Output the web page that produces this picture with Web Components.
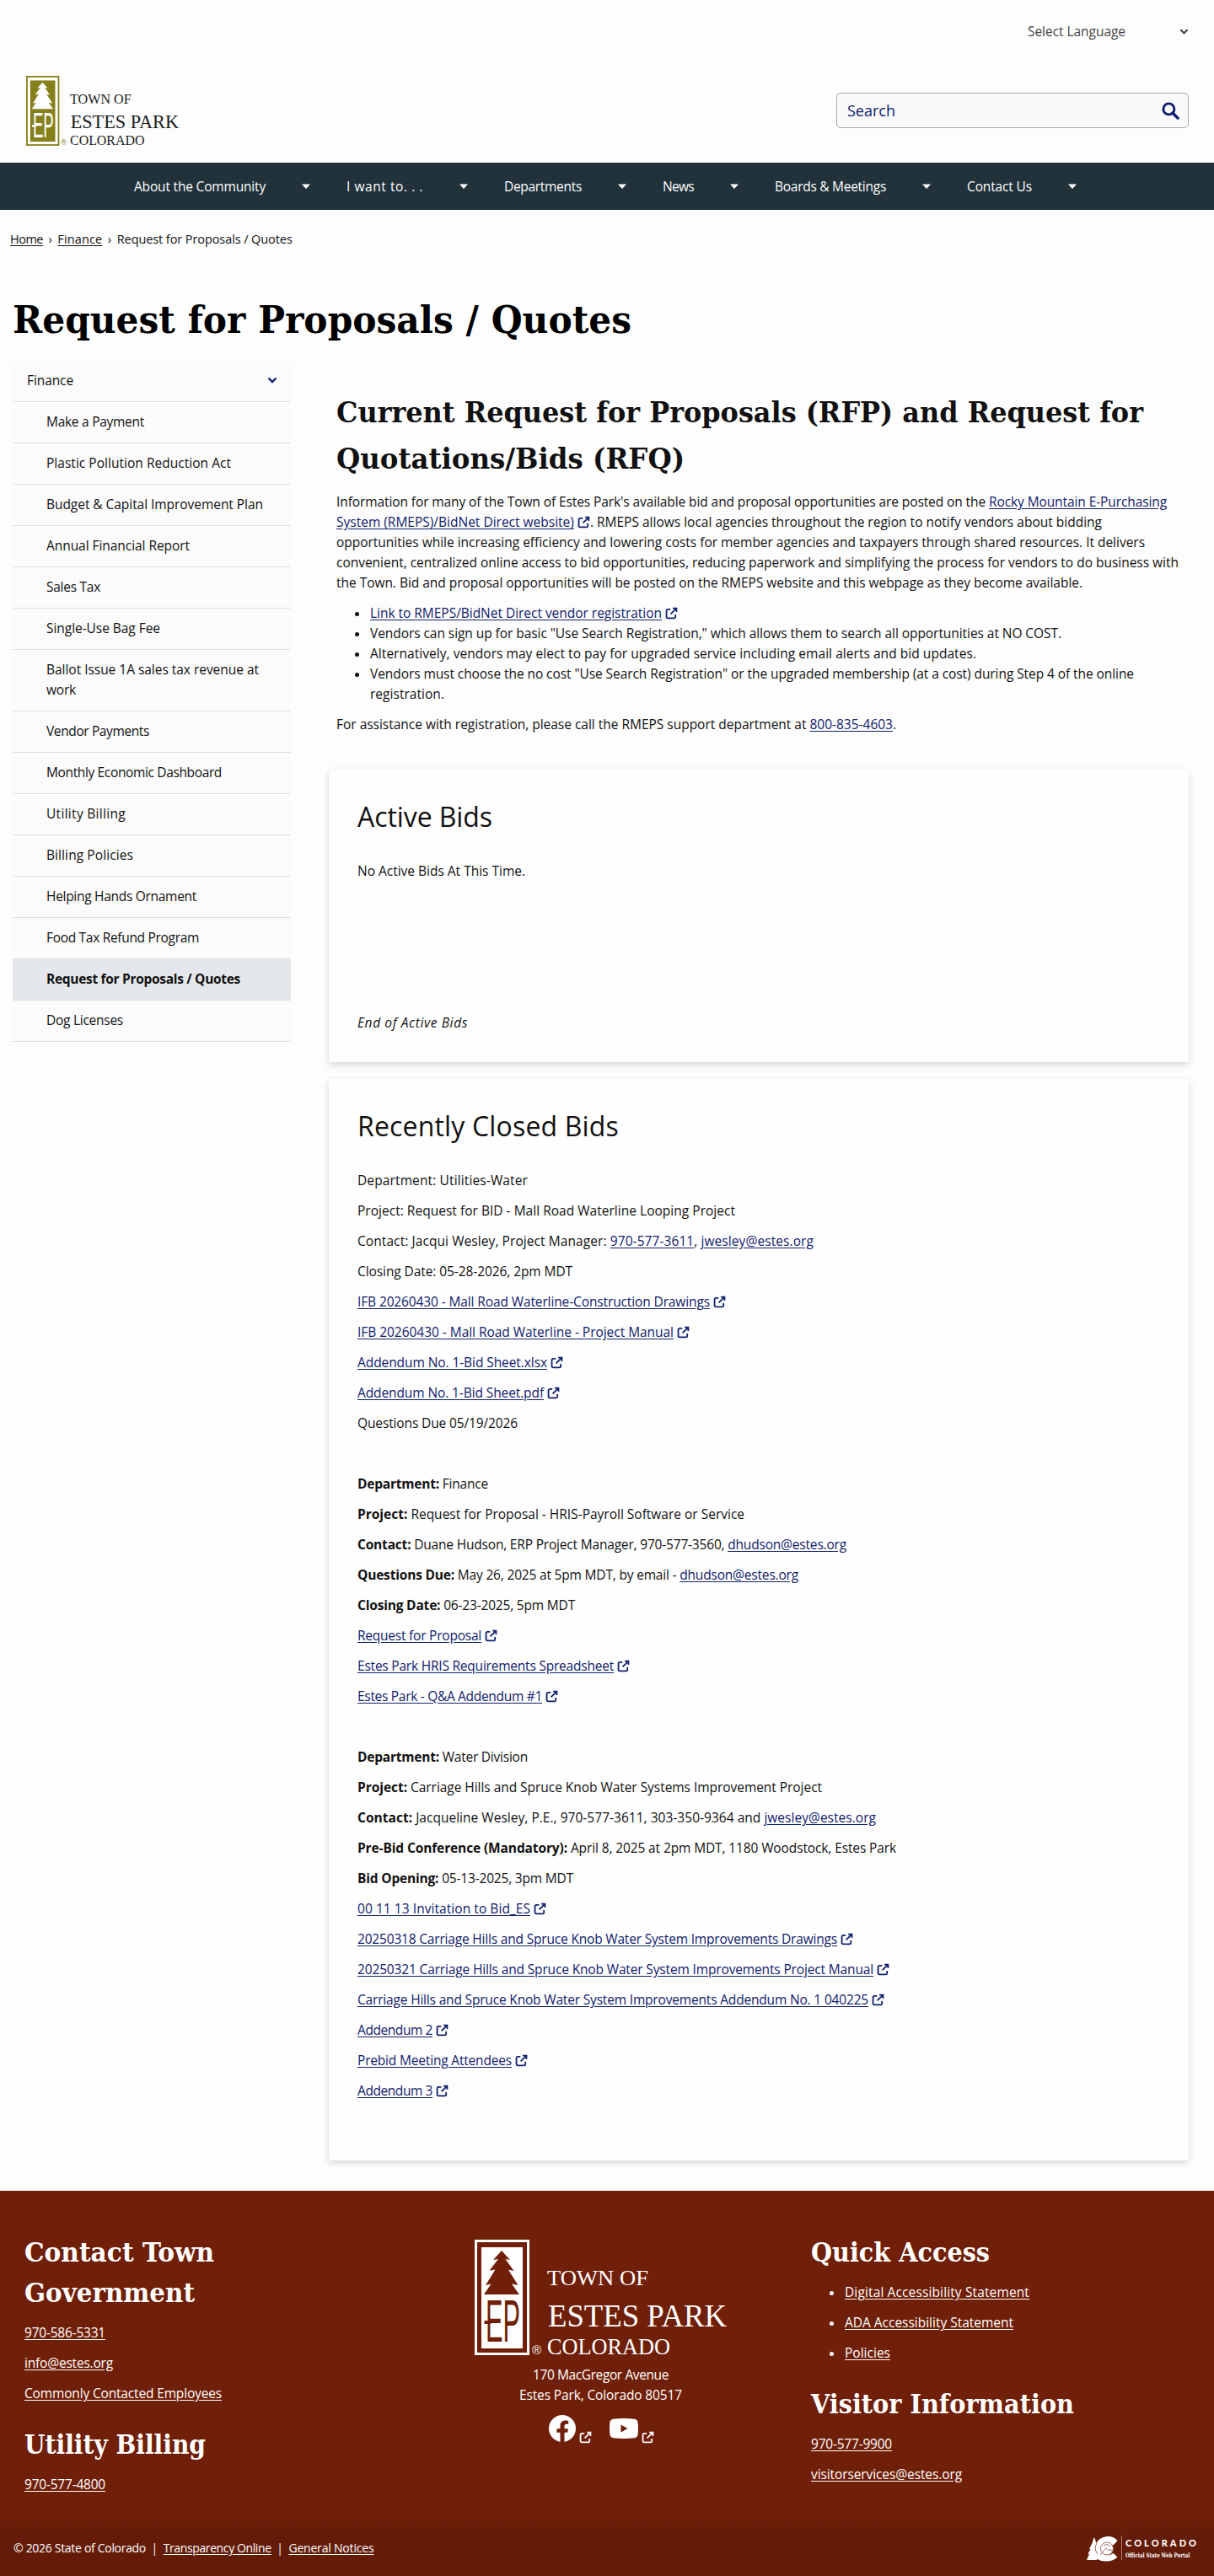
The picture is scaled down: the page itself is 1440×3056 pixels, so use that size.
<!DOCTYPE html>
<html lang="en">
<head>
<meta charset="utf-8">
<title>Request for Proposals / Quotes</title>
<style>
  body {
    background: #fdfdfd;
    color: #111111;
    font-family: 'Open Sans', 'Noto Sans', sans-serif;
    font-size: 15.5px;
    line-height: 24px;
    margin: 0;
  }
</style>
</head>
<body>

<ep-header></ep-header>

<ep-nav>
  <ep-nav-item width="156">About the Community</ep-nav-item>
  <ep-nav-item width="91">I want to. . .</ep-nav-item>
  <ep-nav-item width="92">Departments</ep-nav-item>
  <ep-nav-item width="37">News</ep-nav-item>
  <ep-nav-item width="132">Boards &amp; Meetings</ep-nav-item>
  <ep-nav-item width="77">Contact Us</ep-nav-item>
</ep-nav>

<ep-breadcrumb>
  <ep-text width="39"><ep-link>Home</ep-link></ep-text>
  <span>›</span>
  <ep-text width="53"><ep-link>Finance</ep-link></ep-text>
  <span>›</span>
  <ep-text width="208">Request for Proposals / Quotes</ep-text>
</ep-breadcrumb>

<ep-page>
  <ep-heading slot="title" level="1"><ep-text stretch width="734">Request for Proposals / Quotes</ep-text></ep-heading>

  <ep-side-nav slot="side">
    <ep-side-item parent><ep-text width="55">Finance</ep-text></ep-side-item>
    <ep-side-item><ep-text width="116">Make a Payment</ep-text></ep-side-item>
    <ep-side-item><ep-text width="219">Plastic Pollution Reduction Act</ep-text></ep-side-item>
    <ep-side-item><ep-text width="257">Budget &amp; Capital Improvement Plan</ep-text></ep-side-item>
    <ep-side-item><ep-text width="170">Annual Financial Report</ep-text></ep-side-item>
    <ep-side-item><ep-text width="64">Sales Tax</ep-text></ep-side-item>
    <ep-side-item><ep-text width="135">Single-Use Bag Fee</ep-text></ep-side-item>
    <ep-side-item><ep-text width="252">Ballot Issue 1A sales tax revenue at</ep-text><ep-text width="35">work</ep-text></ep-side-item>
    <ep-side-item><ep-text width="122">Vendor Payments</ep-text></ep-side-item>
    <ep-side-item><ep-text width="208">Monthly Economic Dashboard</ep-text></ep-side-item>
    <ep-side-item><ep-text width="94">Utility Billing</ep-text></ep-side-item>
    <ep-side-item><ep-text width="103">Billing Policies</ep-text></ep-side-item>
    <ep-side-item><ep-text width="178">Helping Hands Ornament</ep-text></ep-side-item>
    <ep-side-item><ep-text width="181">Food Tax Refund Program</ep-text></ep-side-item>
    <ep-side-item selected><ep-text width="230">Request for Proposals / Quotes</ep-text></ep-side-item>
    <ep-side-item><ep-text width="91">Dog Licenses</ep-text></ep-side-item>
  </ep-side-nav>

  <ep-intro>
    <ep-heading slot="heading" level="2">
      <ep-text stretch width="957">Current Request for Proposals (RFP) and Request for</ep-text>
      <ep-text stretch width="413">Quotations/Bids (RFQ)</ep-text>
    </ep-heading>
    <ep-text width="985">Information for many of the Town of Estes Park's available bid and proposal opportunities are posted on the <ep-link>Rocky Mountain E-Purchasing</ep-link></ep-text>
    <ep-text width="908"><ep-link external>System (RMEPS)/BidNet Direct website)</ep-link>. RMEPS allows local agencies throughout the region to notify vendors about bidding</ep-text>
    <ep-text width="959">opportunities while increasing efficiency and lowering costs for member agencies and taxpayers through shared resources. It delivers</ep-text>
    <ep-text width="999">convenient, centralized online access to bid opportunities, reducing paperwork and simplifying the process for vendors to do business with</ep-text>
    <ep-text width="885">the Town. Bid and proposal opportunities will be posted on the RMEPS website and this webpage as they become available.</ep-text>
    <ep-list slot="list">
      <ep-list-item><ep-text width="365"><ep-link external>Link to RMEPS/BidNet Direct vendor registration</ep-link></ep-text></ep-list-item>
      <ep-list-item><ep-text width="820">Vendors can sign up for basic "Use Search Registration," which allows them to search all opportunities at NO COST.</ep-text></ep-list-item>
      <ep-list-item><ep-text width="719">Alternatively, vendors may elect to pay for upgraded service including email alerts and bid updates.</ep-text></ep-list-item>
      <ep-list-item><ep-text width="906">Vendors must choose the no cost "Use Search Registration" or the upgraded membership (at a cost) during Step 4 of the online</ep-text><ep-text width="88">registration.</ep-text></ep-list-item>
    </ep-list>
    <ep-text slot="after" width="664">For assistance with registration, please call the RMEPS support department at <ep-link>800-835-4603</ep-link>.</ep-text>
  </ep-intro>

  <ep-card>
    <ep-text slot="heading" width="160">Active Bids</ep-text>
    <ep-text width="199">No Active Bids At This Time.</ep-text>
    <p>&nbsp;</p>
    <p>&nbsp;</p>
    <p>&nbsp;</p>
    <p>&nbsp;</p>
    <ep-text width="131"><i>End of Active Bids</i></ep-text>
  </ep-card>

  <ep-card>
    <ep-text slot="heading" width="310">Recently Closed Bids</ep-text>
    <ep-text width="202">Department: Utilities-Water</ep-text>
    <ep-text width="448">Project: Request for BID - Mall Road Waterline Looping Project</ep-text>
    <ep-text width="541">Contact: Jacqui Wesley, Project Manager: <ep-link>970-577-3611</ep-link>, <ep-link>jwesley@estes.org</ep-link></ep-text>
    <ep-text width="255">Closing Date: 05-28-2026, 2pm MDT</ep-text>
    <ep-text width="437"><ep-link external>IFB 20260430 - Mall Road Waterline-Construction Drawings</ep-link></ep-text>
    <ep-text width="394"><ep-link external>IFB 20260430 - Mall Road Waterline - Project Manual</ep-link></ep-text>
    <ep-text width="244"><ep-link external>Addendum No. 1-Bid Sheet.xlsx</ep-link></ep-text>
    <ep-text width="240"><ep-link external>Addendum No. 1-Bid Sheet.pdf</ep-link></ep-text>
    <ep-text width="190">Questions Due 05/19/2026</ep-text>
    <p>&nbsp;</p>
    <ep-text width="155"><b>Department:</b> Finance</ep-text>
    <ep-text width="459"><b>Project:</b> Request for Proposal - HRIS-Payroll Software or Service</ep-text>
    <ep-text width="580"><b>Contact:</b> Duane Hudson, ERP Project Manager, 970-577-3560, <ep-link>dhudson@estes.org</ep-link></ep-text>
    <ep-text width="523"><b>Questions Due:</b> May 26, 2025 at 5pm MDT, by email - <ep-link>dhudson@estes.org</ep-link></ep-text>
    <ep-text width="258"><b>Closing Date:</b> 06-23-2025, 5pm MDT</ep-text>
    <ep-text width="166"><ep-link external>Request for Proposal</ep-link></ep-text>
    <ep-text width="323"><ep-link external>Estes Park HRIS Requirements Spreadsheet</ep-link></ep-text>
    <ep-text width="238"><ep-link external>Estes Park - Q&amp;A Addendum #1</ep-link></ep-text>
    <p>&nbsp;</p>
    <ep-text width="202"><b>Department:</b> Water Division</ep-text>
    <ep-text width="551"><b>Project:</b> Carriage Hills and Spruce Knob Water Systems Improvement Project</ep-text>
    <ep-text width="615"><b>Contact:</b> Jacqueline Wesley, P.E., 970-577-3611, 303-350-9364 and <ep-link>jwesley@estes.org</ep-link></ep-text>
    <ep-text width="639"><b>Pre-Bid Conference (Mandatory):</b> April 8, 2025 at 2pm MDT, 1180 Woodstock, Estes Park</ep-text>
    <ep-text width="256"><b>Bid Opening:</b> 05-13-2025, 3pm MDT</ep-text>
    <ep-text width="224"><ep-link external>00 11 13 Invitation to Bid_ES</ep-link></ep-text>
    <ep-text width="588"><ep-link external>20250318 Carriage Hills and Spruce Knob Water System Improvements Drawings</ep-link></ep-text>
    <ep-text width="631"><ep-link external>20250321 Carriage Hills and Spruce Knob Water System Improvements Project Manual</ep-link></ep-text>
    <ep-text width="625"><ep-link external>Carriage Hills and Spruce Knob Water System Improvements Addendum No. 1 040225</ep-link></ep-text>
    <ep-text width="108"><ep-link external>Addendum 2</ep-link></ep-text>
    <ep-text width="202"><ep-link external>Prebid Meeting Attendees</ep-link></ep-text>
    <ep-text width="108"><ep-link external>Addendum 3</ep-link></ep-text>
    <p>&nbsp;</p>
  </ep-card>
</ep-page>

<ep-footer>
  <ep-footer-block slot="left">
    <ep-heading slot="heading" level="3">
      <ep-text stretch width="225">Contact Town</ep-text>
      <ep-text stretch width="202">Government</ep-text>
    </ep-heading>
    <ep-text width="96"><ep-link>970-586-5331</ep-link></ep-text>
    <ep-text width="105"><ep-link>info@estes.org</ep-link></ep-text>
    <ep-text width="234"><ep-link>Commonly Contacted Employees</ep-link></ep-text>
  </ep-footer-block>
  <ep-footer-block slot="left">
    <ep-heading slot="heading" level="3"><ep-text stretch width="215">Utility Billing</ep-text></ep-heading>
    <ep-text width="96"><ep-link>970-577-4800</ep-link></ep-text>
  </ep-footer-block>

  <ep-text slot="address" width="161">170 MacGregor Avenue</ep-text>
  <ep-text slot="address" width="193">Estes Park, Colorado 80517</ep-text>

  <ep-footer-block slot="right">
    <ep-heading slot="heading" level="3"><ep-text stretch width="212">Quick Access</ep-text></ep-heading>
    <ep-list loose>
      <ep-list-item><ep-text width="219"><ep-link>Digital Accessibility Statement</ep-link></ep-text></ep-list-item>
      <ep-list-item><ep-text width="200"><ep-link>ADA Accessibility Statement</ep-link></ep-text></ep-list-item>
      <ep-list-item><ep-text width="54"><ep-link>Policies</ep-link></ep-text></ep-list-item>
    </ep-list>
  </ep-footer-block>
  <ep-footer-block slot="right">
    <ep-heading slot="heading" level="3"><ep-text stretch width="312">Visitor Information</ep-text></ep-heading>
    <ep-text width="96"><ep-link>970-577-9900</ep-link></ep-text>
    <ep-text width="179"><ep-link>visitorservices@estes.org</ep-link></ep-text>
  </ep-footer-block>
</ep-footer>

<ep-footer-bar>
  <ep-text width="157">© 2026 State of Colorado</ep-text>
  <span>|</span>
  <ep-text width="128"><ep-link>Transparency Online</ep-link></ep-text>
  <span>|</span>
  <ep-text width="101"><ep-link>General Notices</ep-link></ep-text>
</ep-footer-bar>

<script>
// Shared by all elements
// Clones markup into an open root
class ParkElement extends HTMLElement {
  constructor() {
    super();

    const template = document.createElement( 'template' );
    template.innerHTML = this.constructor.markup.trim();

    // Root
    const shadowRoot = this.attachShadow( {mode: 'open'} );
    shadowRoot.appendChild( template.content.cloneNode( true ) );
  }
}

// Icons by name
const ICONS = {
  external: '<svg viewBox="0 0 24 24"><path d="M10 4.5H5A2.5 2.5 0 0 0 2.5 7v12A2.5 2.5 0 0 0 5 21.5h12a2.5 2.5 0 0 0 2.5-2.5v-4.5M14.5 2.5h7v7M21.5 2.5l-11 11" fill="none" stroke="currentColor" stroke-width="2.9"/></svg>',
  search: '<svg viewBox="0 0 22 22"><circle cx="8.8" cy="8.8" r="6.8" fill="none" stroke="currentColor" stroke-width="3"/><path d="M13.8 13.8L20 20" stroke="currentColor" stroke-width="3.6" stroke-linecap="round"/></svg>',
  chevron: '<svg viewBox="0 0 12 12"><path d="M1.5 3.5L6 8l4.500-4.500" fill="none" stroke="currentColor" stroke-width="2.3"/></svg>',
  caret: '<svg viewBox="0 0 12 12"><path d="M1 3.500h10L6 9z" fill="currentColor"/></svg>',
  facebook: '<svg viewBox="0 0 32 32"><circle cx="16" cy="16" r="16" fill="currentColor"/><path d="M13.5 32V20.8H9.400v-4.600h4.100v-3.500c0-4.100 2.400-6.300 6.100-6.300 1.800 0 3.600.3 3.600.3v4h-2c-2 0-2.700 1.300-2.700 2.600v2.900h4.500l-.7 4.600h-3.800V32z" fill="#701f08"/></svg>',
  youtube: '<svg viewBox="0 0 34 24"><path d="M4.500.7Q17-.6 29.500.7 33 1.200 33.500 4.500q1 7.500 0 15-.5 3.300-4 3.800-12.500 1.300-25 0-3.500-.5-4-3.800-1-7.500 0-15Q1 1.200 4.500.7z" fill="currentColor"/><path d="M13.500 7.500v9l8-4.500z" fill="#701f08"/></svg>'
};

class ParkIcon extends ParkElement {
  static markup = `
    <style>
      :host {
        display: inline-block;
      }

      span,
      svg {
        display: block;
        height: 100%;
        width: 100%;
      }
    </style><span></span>
  `;

  connectedCallback() {
    this.shadowRoot.querySelector( 'span' ).innerHTML = ICONS[this.getAttribute( 'name' )];
  }
}

window.customElements.define( 'ep-icon', ParkIcon );

// No whitespace around the anchor
// It would show next to punctuation
class ParkLink extends ParkElement {
  static markup = `
    <style>
      :host {
        display: inline;
      }

      a {
        color: var( --link-color, #10206c );
        text-decoration: underline;
        text-underline-offset: 2px;
      }

      ep-icon {
        color: var( --link-color, #10206c );
        display: none;
        height: 15px;
        margin-left: 4px;
        vertical-align: -2px;
        width: 15px;
      }

      :host( [external] ) ep-icon {
        display: inline-block;
      }
    </style><a href="#"><slot></slot></a><ep-icon name="external"></ep-icon>
  `;
}

window.customElements.define( 'ep-link', ParkLink );

// One line of text set to a given width
// Letter spacing by default
// Horizontal scale when "stretch" is present
class ParkText extends ParkElement {
  static markup = `
    <style>
      :host {
        display: block;
        transform-origin: left center;
        white-space: nowrap;
        width: max-content;
      }
    </style>
    <slot></slot>
  `;

  connectedCallback() {
    const target = parseFloat( this.getAttribute( 'width' ) );
    const actual = this.getBoundingClientRect().width;
    const count = this.textContent.trim().length;

    if( !target || !actual ) {
      return;
    }

    if( this.hasAttribute( 'stretch' ) ) {
      this.style.transform = `scaleX( ${target / actual} )`;
    } else {
      this.style.letterSpacing = `${( target - actual ) / count}px`;
    }
  }
}

class ParkLogo extends ParkElement {
  static markup = `
    <style>
      :host {
        display: block;
      }

      svg {
        display: block;
        overflow: visible;
        width: 100%;
      }

      .words {
        fill: var( --logo-text );
        font-family: 'Liberation Serif', serif;
      }

      .ink {
        fill: var( --logo-ink );
      }

      .paper {
        fill: var( --logo-paper );
      }
    </style>
    <svg viewBox="0 0 299 137">
      <rect class="ink" width="65" height="137"/>
      <rect class="paper" x="3" y="3" width="59" height="131"/>
      <rect class="ink" x="8" y="9" width="49" height="120"/>
      <path class="paper" d="M32 13L42 24l-5.500-1L46.500 37l-6.500-1.200L51.500 54l-7.500-1.500L53 65H11l8.500-12.500L13 54l11.500-18.500-7 1.200L28 23l-6 1z"/>
      <text class="paper" transform="translate( 13 121 ) scale( 0.44 1 )" font-family="Liberation Sans" font-size="70">EP</text>
      <rect class="paper" x="11.5" y="96" width="8" height="4"/>
      <text x="68" y="136" font-family="Liberation Sans" font-size="15" fill="var( --logo-mark )">®</text>
      <g class="words">
        <text x="86" y="54" font-size="26" textLength="120" lengthAdjust="spacingAndGlyphs">TOWN OF</text>
        <text x="87" y="103" font-size="38" textLength="212" lengthAdjust="spacingAndGlyphs">ESTES PARK</text>
        <text x="86" y="135.500" font-size="27" textLength="146" lengthAdjust="spacingAndGlyphs">COLORADO</text>
      </g>
    </svg>
  `;
}

window.customElements.define( 'ep-logo', ParkLogo );

class ParkHeading extends ParkElement {
  static markup = `
    <style>
      :host {
        display: block;
        font-family: 'DejaVu Serif Condensed', 'DejaVu Serif', serif;
        font-weight: 700;
      }

      :host( [level='1'] ) {
        color: #000000;
        font-size: 45px;
        line-height: 72px;
      }

      :host( [level='2'] ) {
        font-size: 34px;
        line-height: 55px;
      }

      :host( [level='3'] ) {
        font-size: 31px;
        line-height: 48px;
      }
    </style>
    <slot></slot>
  `;

  connectedCallback() {
    this.setAttribute( 'role', 'heading' );
    this.setAttribute( 'aria-level', this.getAttribute( 'level' ) );
  }
}

window.customElements.define( 'ep-heading', ParkHeading );

class ParkHeader extends ParkElement {
  static markup = `
    <style>
      :host {
        box-sizing: border-box;
        display: flex;
        flex-direction: column;
        gap: 41px;
        height: 193px;
        padding: 25px 30px 0 31px;
      }

      .language {
        align-items: center;
        align-self: flex-end;
        color: #444444;
        display: flex;
        justify-content: space-between;
        width: 191px;
      }

      .language ep-icon {
        height: 11px;
        width: 11px;
      }

      .brand {
        align-items: center;
        display: flex;
        justify-content: space-between;
      }

      ep-logo {
        --logo-ink: #85801c;
        --logo-mark: #85801c;
        --logo-paper: #ffffff;
        --logo-text: #1a1a1a;
        width: 181px;
      }

      .search {
        align-items: center;
        background: #f9f9f9;
        border: 1px solid #a9a9a9;
        border-radius: 5px;
        box-sizing: border-box;
        color: #0c1c70;
        display: flex;
        font-size: 18px;
        height: 42px;
        justify-content: space-between;
        padding: 0 10px 0 12px;
        width: 418px;
      }

      .search ep-icon {
        height: 21px;
        width: 21px;
      }
    </style>
    <div class="language">
      <ep-text width="116">Select Language</ep-text>
      <ep-icon name="chevron"></ep-icon>
    </div>
    <div class="brand">
      <ep-logo></ep-logo>
      <div class="search">
        <ep-text width="57">Search</ep-text>
        <ep-icon name="search"></ep-icon>
      </div>
    </div>
  `;
}

window.customElements.define( 'ep-header', ParkHeader );

class ParkNav extends ParkElement {
  static markup = `
    <style>
      :host {
        align-items: center;
        background: #21323b;
        box-sizing: border-box;
        color: #ffffff;
        display: flex;
        height: 56px;
        padding-left: 159px;
      }
    </style>
    <slot></slot>
  `;
}

window.customElements.define( 'ep-nav', ParkNav );

class ParkNavItem extends ParkElement {
  static markup = `
    <style>
      :host {
        align-items: center;
        display: flex;
      }

      ep-icon {
        height: 12px;
        margin: 0 42px;
        width: 12px;
      }
    </style>
    <ep-text><slot></slot></ep-text>
    <ep-icon name="caret"></ep-icon>
  `;

  connectedCallback() {
    const label = this.shadowRoot.querySelector( 'ep-text' );
    const width = parseFloat( this.getAttribute( 'width' ) );

    // Text is slotted twice over
    // Space it from here
    label.style.letterSpacing = `${( width - label.getBoundingClientRect().width ) / this.textContent.length}px`;
  }
}

class ParkBreadcrumb extends ParkElement {
  static markup = `
    <style>
      :host {
        --link-color: #111111;
        display: flex;
        font-size: 14.5px;
        gap: 6.5px;
        padding: 23px 12px 0 12px;
      }
    </style>
    <slot></slot>
  `;
}

window.customElements.define( 'ep-breadcrumb', ParkBreadcrumb );

class ParkPage extends ParkElement {
  static markup = `
    <style>
      :host {
        display: block;
        padding: 48px 30px 36px 15px;
      }

      .columns {
        align-items: flex-start;
        display: flex;
        gap: 45px;
        margin-top: 13px;
      }

      .main {
        display: flex;
        flex: 1;
        flex-direction: column;
        gap: 20px;
      }
    </style>
    <slot name="title"></slot>
    <div class="columns">
      <slot name="side"></slot>
      <div class="main"><slot></slot></div>
    </div>
  `;
}

window.customElements.define( 'ep-page', ParkPage );

class ParkSideNav extends ParkElement {
  static markup = `
    <style>
      :host {
        background: #fbfbfb;
        display: flex;
        flex: none;
        flex-direction: column;
        width: 330px;
      }
    </style>
    <slot></slot>
  `;
}

window.customElements.define( 'ep-side-nav', ParkSideNav );

class ParkSideItem extends ParkElement {
  static markup = `
    <style>
      :host {
        border-bottom: 1px solid #dcdfe1;
        display: flex;
        padding: 11px 16px 13px 40px;
      }

      :host( [parent] ) {
        padding: 10px 16px 13px 17px;
      }

      :host( [selected] ) {
        background: #e4e8ec;
        font-weight: 700;
      }

      div {
        flex: 1;
      }

      ep-icon {
        align-self: center;
        color: #0c1c70;
        display: none;
        height: 12px;
        width: 12px;
      }

      :host( [parent] ) ep-icon {
        display: block;
      }
    </style>
    <div><slot></slot></div>
    <ep-icon name="chevron"></ep-icon>
  `;
}

window.customElements.define( 'ep-side-item', ParkSideItem );

class ParkIntro extends ParkElement {
  static markup = `
    <style>
      :host {
        display: block;
        padding: 33px 0 22px 9px;
      }

      .body {
        margin: 11px 0 12px 0;
      }

      .after {
        margin-top: 12px;
      }
    </style>
    <slot name="heading"></slot>
    <div class="body"><slot></slot></div>
    <slot name="list"></slot>
    <div class="after"><slot name="after"></slot></div>
  `;
}

window.customElements.define( 'ep-intro', ParkIntro );

class ParkList extends ParkElement {
  static markup = `
    <style>
      :host {
        display: flex;
        flex-direction: column;
      }

      :host( [loose] ) {
        gap: 12px;
      }
    </style>
    <slot></slot>
  `;
}

window.customElements.define( 'ep-list', ParkList );

class ParkListItem extends ParkElement {
  static markup = `
    <style>
      :host {
        display: flex;
      }

      i {
        background: currentColor;
        border-radius: 50%;
        flex: none;
        height: 5px;
        margin: 11px 13px 0 22px;
        width: 5px;
      }
    </style>
    <i></i>
    <div><slot></slot></div>
  `;
}

window.customElements.define( 'ep-list-item', ParkListItem );

class ParkCard extends ParkElement {
  static markup = `
    <style>
      :host {
        background: #fefefe;
        box-shadow: 0 3px 8px rgba( 0, 0, 0, 0.15 );
        display: block;
        padding: 32px 34px 35px 34px;
      }

      .heading {
        font-size: 32px;
        line-height: 48px;
        margin-bottom: 28px;
      }

      .rows {
        display: flex;
        flex-direction: column;
        gap: 12px;
      }

      ::slotted( p ) {
        margin: 0;
      }
    </style>
    <div class="heading"><slot name="heading"></slot></div>
    <div class="rows"><slot></slot></div>
  `;
}

window.customElements.define( 'ep-card', ParkCard );

class ParkFooterBlock extends ParkElement {
  static markup = `
    <style>
      :host {
        display: block;
      }

      .rows {
        display: flex;
        flex-direction: column;
        gap: 12px;
        margin-top: 11px;
      }
    </style>
    <slot name="heading"></slot>
    <div class="rows"><slot></slot></div>
  `;
}

window.customElements.define( 'ep-footer-block', ParkFooterBlock );

class ParkFooter extends ParkElement {
  static markup = `
    <style>
      :host {
        --link-color: #ffffff;
        background: #701f08;
        box-sizing: border-box;
        color: #ffffff;
        display: grid;
        grid-template-columns: 534px 399px 1fr;
        height: 386px;
        padding: 49px 29px 0 29px;
      }

      .column {
        display: flex;
        flex-direction: column;
        gap: 25px;
      }

      .center {
        align-items: center;
        display: flex;
        flex-direction: column;
        padding-top: 9px;
        width: 299px;
      }

      ep-logo {
        --logo-ink: #ffffff;
        --logo-mark: #ffffff;
        --logo-paper: #701f08;
        --logo-text: #ffffff;
        margin-bottom: 11px;
        width: 299px;
      }

      .social {
        align-items: flex-end;
        display: flex;
        margin-top: 12px;
      }

      .small {
        height: 15px;
        margin: 0 -2px -2px 4px;
        width: 15px;
      }

      .facebook {
        height: 32px;
        width: 32px;
      }

      .youtube {
        height: 24px;
        margin: 0 0 4px 23px;
        width: 34px;
      }
    </style>
    <div class="column"><slot name="left"></slot></div>
    <div class="center">
      <ep-logo></ep-logo>
      <slot name="address"></slot>
      <div class="social">
        <ep-icon class="facebook" name="facebook"></ep-icon>
        <ep-icon class="small" name="external"></ep-icon>
        <ep-icon class="youtube" name="youtube"></ep-icon>
        <ep-icon class="small" name="external"></ep-icon>
      </div>
    </div>
    <div class="column"><slot name="right"></slot></div>
  `;
}

window.customElements.define( 'ep-footer', ParkFooter );

class ParkFooterBar extends ParkElement {
  static markup = `
    <style>
      :host {
        --link-color: #ffffff;
        background: linear-gradient( #701f08, #641c08 22px );
        box-sizing: border-box;
        color: #ffffff;
        display: flex;
        font-size: 14px;
        height: 71px;
        justify-content: space-between;
        padding: 23px 13px 0 16px;
      }

      .notes {
        display: flex;
        gap: 6.5px;
        padding-top: 3px;
      }

      svg {
        display: block;
      }
    </style>
    <div class="notes"><slot></slot></div>
    <svg width="122" height="32" viewBox="0 0 138 32" style="width: 138px">
      <path d="M0 29l3-7H1.500l3-6H3l3.500-7L8 4l1-2 1 3 1.500 4Q15 2 24 1q8-.5 12.500 5l-5 5.500Q28 8.500 24 9q-8 1-7.500 8 .5 6 7.500 6.500 4 0 7.500-2.500l5 4.500Q31 31 22 30.500q-5 0-9-2.500l-1.500 1z" fill="#ffffff"/>
      <circle cx="23" cy="15.500" r="8.500" fill="#ffffff"/>
      <g fill="none" stroke="#8b4a3a" stroke-width="0.8">
        <circle cx="24" cy="15.500" r="7.500"/>
        <path d="M13 22q-5-6-1-13M16 23l7-8 3 3 2-2 4 5M20 12q4-3 8 1"/>
      </g>
      <path d="M41.500 0v29" stroke="#b07f72"/>
      <text x="46" y="13" fill="#ffffff" font-family="Lato" font-size="11" font-weight="900" textLength="84">COLORADO</text>
      <text transform="translate( 46 25.5 ) scale( 0.82 1 )" fill="#ffffff" font-family="DejaVu Serif Condensed, DejaVu Serif" font-size="7.5" font-weight="700">Official State Web Portal</text>
    </svg>
  `;
}

window.customElements.define( 'ep-footer-bar', ParkFooterBar );

// Last, so that lines are measured in their final fonts
window.customElements.define( 'ep-text', ParkText );
window.customElements.define( 'ep-nav-item', ParkNavItem );
</script>
</body>
</html>
